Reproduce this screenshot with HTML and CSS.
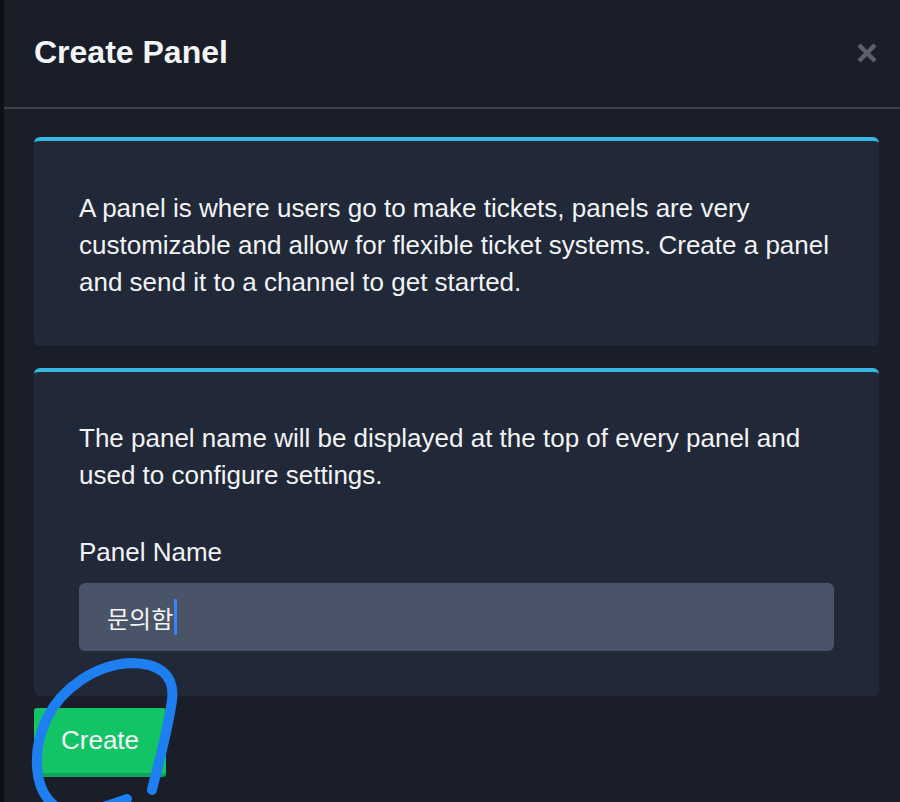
FILE: index.html
```html
<!DOCTYPE html>
<html>
<head>
  <title>Create Panel</title>
  <link rel="stylesheet" href="styles.css">
</head>
<body>
  <div class="modal">
    <div class="modal-header">
      <h1>Create Panel</h1>
      <svg class="close" width="22" height="22" viewBox="0 0 22 22">
        <path d="M3 3 L19 19 M19 3 L3 19" stroke="#5b606b" stroke-width="4.5" stroke-linecap="butt"/>
      </svg>
    </div>

    <div class="modal-body">
      <div class="card intro">
        <p>A panel is where users go to make tickets, panels are very customizable and allow for flexible ticket systems. Create a panel and send it to a channel to get started.</p>
      </div>

      <div class="card">
        <p>The panel name will be displayed at the top of every panel and used to configure settings.</p>
        <label class="field-label">Panel Name</label>
        <div class="input">문의함<span class="caret"></span></div>
      </div>

      <button class="btn-create">Create</button>
    </div>
  </div>

  <!-- hand drawn circle around the button -->
  <svg class="scribble" width="900" height="802" viewBox="0 0 900 802">
    <path d="M152 790 C158 765 168 730 172 700 C175 675 160 663 130 663 C95 665 62 688 47 718 C31 752 34 790 55 806 C75 818 108 806 127 799"
          fill="none" stroke="#1d7ff0" stroke-width="10" stroke-linecap="round" stroke-linejoin="round"/>
  </svg>
</body>
</html>
```

FILE: styles.css
```css
html, body { height: 100%; }
body {
  margin: 0;
  background-color: #0d1015;
  font-family: "Liberation Sans", Arial, "Noto Sans CJK KR", sans-serif;
  color: #f2f3f5;
  overflow: hidden;
}
.modal {
  margin-left: 4px;
  min-height: 100%;
  background-color: #1a1e29;
}
.modal-header {
  display: flex;
  justify-content: space-between;
  align-items: center;
  padding: 32px 22px 35px 30px;
  border-bottom: 2px solid #3c414c;
}
.modal-header h1 {
  margin: 0;
  font-size: 32px;
  line-height: 40px;
  font-weight: bold;
  color: #f4f5f7;
}
.close { margin-top: 1px; }
.modal-body {
  padding: 28px 21px 0 30px;
  display: flex;
  flex-direction: column;
  align-items: flex-start;
}
.card {
  align-self: stretch;
  background-color: #212838;
  border-top: 4px solid #38b6e3;
  border-radius: 6px;
  padding: 48px 45px 45px 45px;
  margin-bottom: 22px;
  font-size: 26px;
  line-height: 37px;
}
.card.intro { padding-top: 49px; }
.card p { margin: 0; }
.field-label {
  display: block;
  margin-top: 40px;
}
.input {
  margin-top: 12px;
  height: 68px;
  display: flex;
  align-items: center;
  padding: 0 28px;
  background-color: #4a5468;
  border-radius: 6px;
  font-family: "Noto Sans CJK KR", "Liberation Sans", sans-serif;
  font-size: 24px;
  color: #f4f5f7;
}
.caret {
  display: inline-block;
  width: 3px;
  height: 36px;
  margin-left: 1px;
  background-color: #3a82f7;
  border-radius: 1px;
}
.card:last-of-type { margin-bottom: 12px; }
.btn-create {
  font-family: "Liberation Sans", Arial, sans-serif;
  font-size: 26px;
  color: #f4f5f7;
  background-color: #12c466;
  border: none;
  border-bottom: 4px solid #0ea658;
  border-radius: 3px;
  padding: 0 27px;
  height: 69px;
}
.scribble {
  position: absolute;
  left: 0;
  top: 0;
  pointer-events: none;
}
```
